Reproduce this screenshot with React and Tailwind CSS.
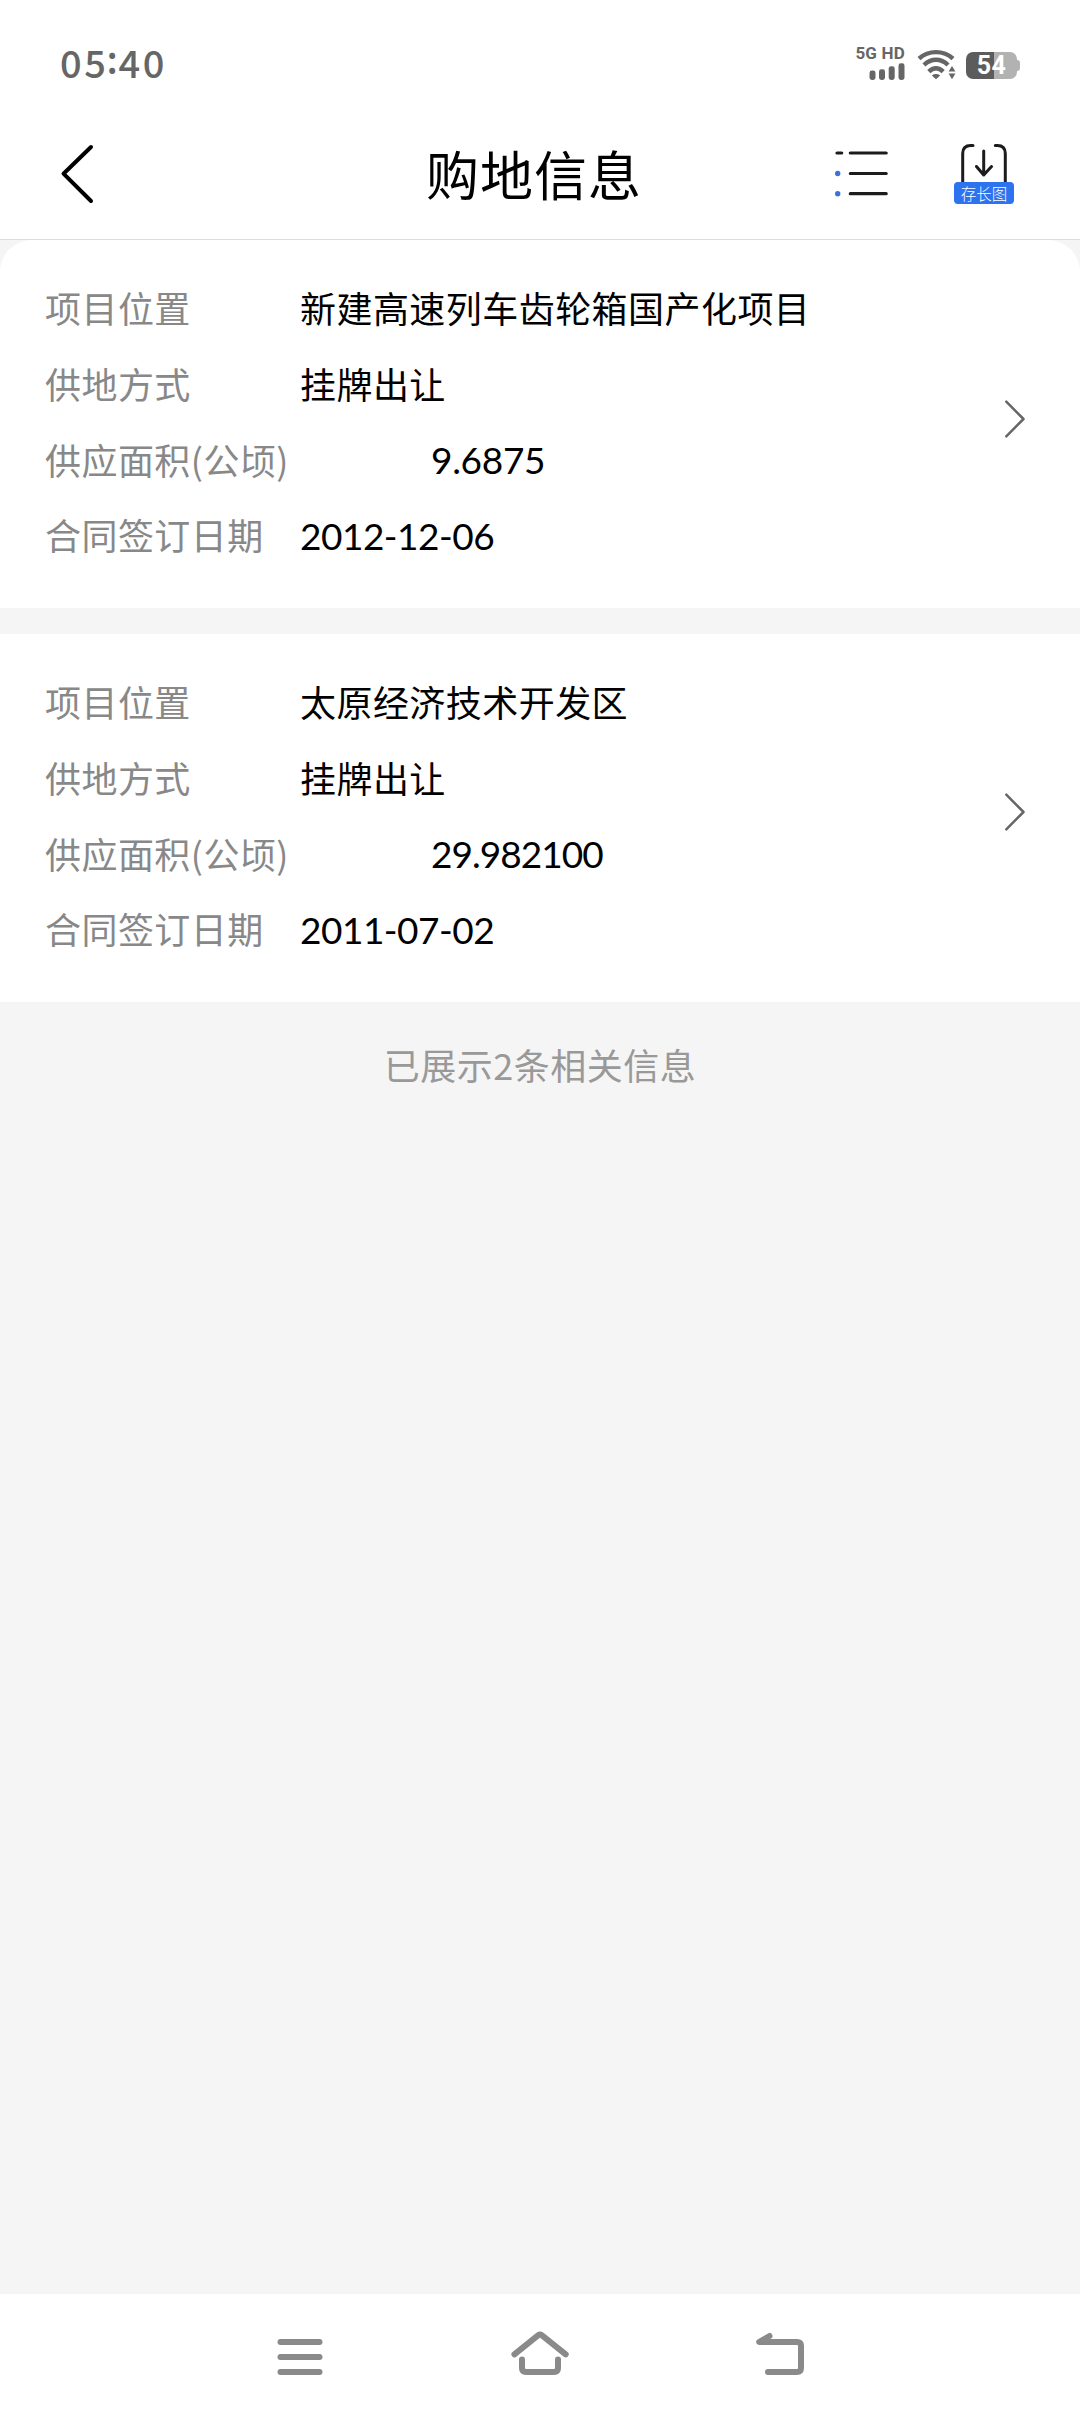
const records = [
  { place: '新建高速列车齿轮箱国产化项目', method: '挂牌出让', area: '9.6875', date: '2012-12-06' },
  { place: '太原经济技术开发区', method: '挂牌出让', area: '29.982100', date: '2011-07-02' },
];

function StatusBar() {
  return (
    <div className="flex h-[128px] items-start justify-between pl-[60px] pr-[60px]">
      <div className="mt-[40px] flex font-['Noto_Sans_CJK_SC',sans-serif] text-[38px] font-medium leading-[44px] tracking-[2.6px] text-[#666]">
        <span>05</span>
        <span className="-ml-[2px] -mt-[4px] mr-[-2px]">:</span>
        <span>40</span>
      </div>
      <div className="mt-[44px] flex">
        <div className="mr-[11px] flex w-[50px] flex-col items-end">
          <span className="whitespace-nowrap font-['Roboto',sans-serif] text-[17px] font-bold leading-[19px] tracking-[0.2px] text-[#666]">5G HD</span>
          <svg width="36" height="18" viewBox="0 0 36 18" fill="#666">
            <rect x="0.5" y="7.600" width="6" height="9.3" rx="2.4" />
            <rect x="10" y="6.200" width="6" height="10.8" rx="2.4" />
            <rect x="19.700" y="3.200" width="6" height="13.8" rx="2.4" />
            <rect x="29.500" y="0.3" width="6" height="16.7" rx="2.4" />
          </svg>
        </div>
        <svg className="mr-[10px]" width="40" height="38" viewBox="0 0 40 38" fill="none" stroke="#666" strokeWidth="4.4">
          <path d="M3 14.6C12.5 6 27.500 6 37 14.600" />
          <path d="M8 21C15 14 25 14 32 21" />
          <path d="M12.800 27.600C17.300 23.200 22.700 23.200 27.200 27.600" />
          <path d="M15.800 31.500Q20 28.600 24.200 31.500L20 35.300Z" fill="#666" stroke="none" />
          <path d="M36 20L41 28V37H31V27Z" fill="#fff" stroke="none" />
          <path d="M32.600 27.600L36 22L39.400 27.600ZM32.600 29.600L36 35.200L39.400 29.600Z" fill="#666" stroke="none" />
        </svg>
        <div className="mt-[8px] flex h-[27px] items-center">
          <div className="flex h-[27px] w-[51px] items-center justify-center rounded-[7px] bg-[linear-gradient(to_right,#5c5c5c_54%,#b2b2b2_54%)] font-['Roboto',sans-serif] text-[25px] font-bold leading-[27px] tracking-[0.5px] text-white">54</div>
          <div className="h-[11px] w-[3px] rounded-r-[3px] bg-[#b2b2b2]" />
        </div>
      </div>
    </div>
  );
}

function Header() {
  return (
    <header className="flex h-[112px] items-start border-b border-[#dcdcdc]">
      <svg className="ml-[56px] mt-[14px]" width="44" height="64" viewBox="0 0 44 64" fill="none" stroke="#000" strokeWidth="4" strokeLinecap="round" strokeLinejoin="round">
        <path d="M35 5L7.500 31.700L35 59" />
      </svg>
      <h1 className="ml-[326px] mt-[5px] w-[221px] whitespace-nowrap font-['Noto_Sans_CJK_SC',sans-serif] text-[53px] font-normal leading-[80px] tracking-[1px] text-black">购地信息</h1>
      <svg className="ml-[184px] mt-[20px]" width="60" height="52" viewBox="0 0 60 52" fill="none" stroke="#1c1c1c" strokeWidth="3.200" strokeLinecap="round">
        <path d="M6 5H10.700M19.300 5H55.200M19.300 25.500H55.200M19.300 45.700H55.200" />
        <circle cx="6.700" cy="25.500" r="2.700" fill="#3b72d6" stroke="none" />
        <circle cx="6.700" cy="45.700" r="2.700" fill="#3b72d6" stroke="none" />
      </svg>
      <div className="ml-[63px] mt-[14px] flex w-[60px] flex-col items-center">
        <svg width="60" height="40" viewBox="0 0 60 40" fill="none" stroke="#1c1c1c" strokeWidth="3" strokeLinecap="round" strokeLinejoin="round">
          <path d="M19 3.500H16.700Q8.700 3.500 8.700 11.500V42M41.300 3.500H43.500Q51.300 3.500 51.300 11.500V42M29.700 9V33M22.500 24.500L29.700 33L37.500 24.500" />
        </svg>
        <div className="h-[22px] w-[60px] rounded-[4px] bg-[#2d72ef] text-center font-['Noto_Sans_CJK_SC',sans-serif] text-[15.5px] font-light leading-[22px] text-white">存长图</div>
      </div>
    </header>
  );
}

function Row({ label, value, valueClass = 'text-black', wide }) {
  return (
    <div className="flex h-[75.7px] items-center whitespace-nowrap">
      <span className={wide ? 'w-[386px] text-[#888]' : 'w-[255px] text-[#888]'}>{label}</span>
      <span className={valueClass}>{value}</span>
    </div>
  );
}

const digits = "mt-[3px] font-['Lato',sans-serif] text-[37px] text-black";

function Card({ record, first }) {
  return (
    <section className={`${first ? 'rounded-t-[32px]' : ''} flex h-[368px] justify-between bg-white pl-[45px] pr-[54px]`}>
      <div className="mt-[29.5px] font-['Noto_Sans_CJK_SC',sans-serif] text-[36px] leading-[52px] tracking-[0.45px]">
        <Row label="项目位置" value={record.place} />
        <Row label="供地方式" value={record.method} />
        <Row label="供应面积(公顷)" value={record.area} valueClass={`${digits} ${first ? 'tracking-[-0.3px]' : 'tracking-[-0.95px]'}`} wide />
        <Row label="合同签订日期" value={record.date} valueClass={`${digits} tracking-[-0.5px]`} />
      </div>
      <svg className={first ? 'mt-[159px]' : 'mt-[158px]'} width="22" height="40" viewBox="0 0 22 40" fill="none" stroke="#666" strokeWidth="2.500" strokeLinecap="round" strokeLinejoin="round">
        <path d="M2.300 2.700L19.500 20L2.300 37.300" />
      </svg>
    </section>
  );
}

function NavBar() {
  return (
    <nav className="flex h-[125px] justify-center bg-white pt-[36px]">
      {[
        'M40.500 12H79.500M40.500 27H79.500M40.500 42H79.500',
        'M34.400 24.300L58 5.300Q60 3.800 62 5.300L85.700 24.300M42 29.500V38Q42 42 46 42H74Q78 42 78 38V29.500',
        'M49.500 6L39.200 12H77Q81 12 81 16V38Q81 42 77 42H48',
      ].map((d) => (
        <svg key={d} className="mx-[60px]" width="120" height="52" viewBox="0 0 120 52" fill="none" stroke="#8a8a8a" strokeWidth="6" strokeLinecap="round" strokeLinejoin="round">
          <path d={d} />
        </svg>
      ))}
    </nav>
  );
}

export default function App() {
  return (
    <div className="flex h-[2419px] w-[1080px] flex-col bg-[#f5f5f5]">
      <div className="bg-white">
        <StatusBar />
        <Header />
      </div>
      <main className="flex flex-1 flex-col">
        <div className="flex flex-col gap-[26px]">
          {records.map((r, i) => (
            <Card key={r.date} record={r} first={i === 0} />
          ))}
        </div>
        <p className="mt-[36px] text-center font-['Noto_Sans_CJK_SC',sans-serif] text-[36px] leading-[52px] tracking-[0.5px] text-[#999]">已展示2条相关信息</p>
      </main>
      <NavBar />
    </div>
  );
}
